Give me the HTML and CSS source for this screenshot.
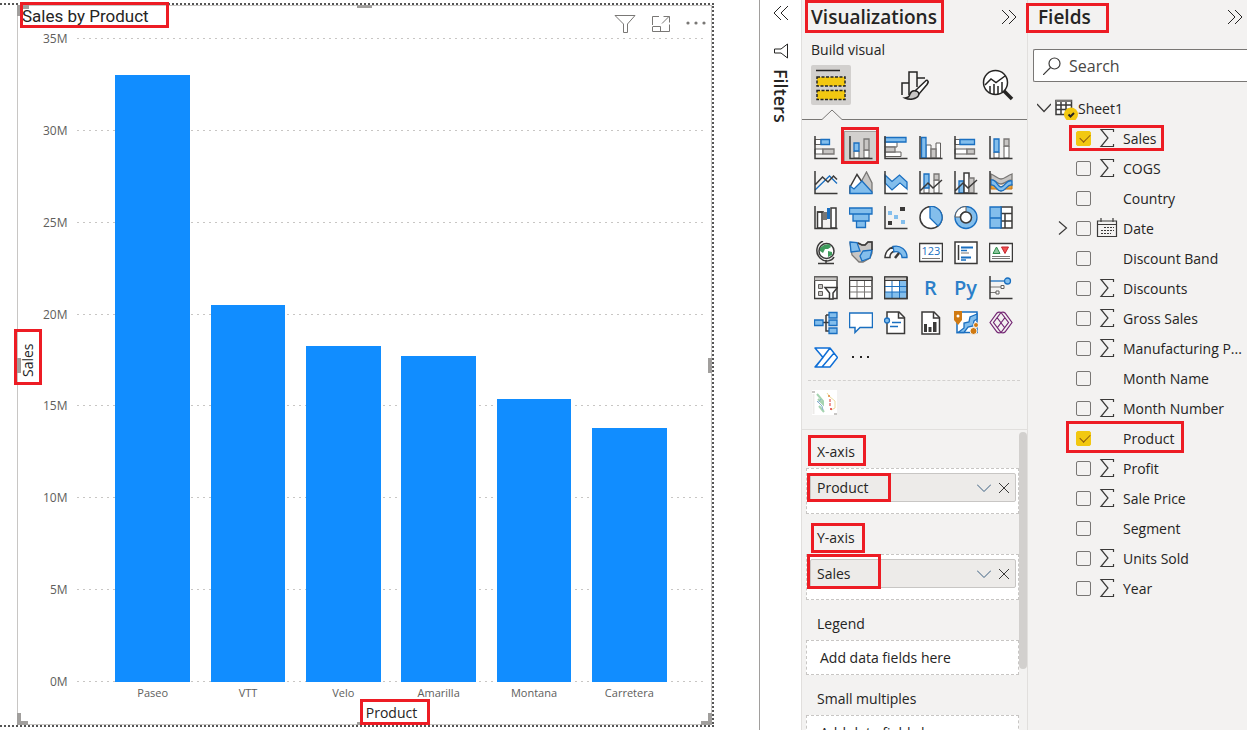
FILE: index.html
```html
<!DOCTYPE html>
<html lang="en">
<head>
  <meta charset="UTF-8">
  <title>Sales by Product</title>
  <link rel="stylesheet" href="styles.css">
</head>
<body>
  <main class="canvas">
    <div class="page">
      <section class="visual">
        <header class="visual-head">
          <h1>Sales by Product</h1>
          <div class="visual-tools">
            <button aria-label="Filters"><svg width="22" height="20" viewBox="0 0 22 20"><path d="M1 1.500H21L13.500 10V18.500H9.500V10Z"/></svg></button>
            <button aria-label="Focus mode"><svg width="20" height="18" viewBox="0 0 20 18"><path d="M8 1.500H1.500V10M1.500 12V16.500H18.500V9.500M1.500 11.500H9.500V16.500M11 8.500L18 1.500M12.500 1.500H18.500V7.500"/></svg></button>
            <button aria-label="More options"><svg class="dots" width="20" height="18" viewBox="0 0 20 18"><circle cx="2" cy="8" r="1.600"/><circle cx="10" cy="8" r="1.600"/><circle cx="18" cy="8" r="1.600"/></svg></button>
          </div>
        </header>
        <div class="chart">
          <div class="y-title">Sales</div>
          <div class="plot">
            <div class="ticks">
              <div class="tick">35M</div>
              <div class="tick">30M</div>
              <div class="tick">25M</div>
              <div class="tick">20M</div>
              <div class="tick">15M</div>
              <div class="tick">10M</div>
              <div class="tick">5M</div>
              <div class="tick">0M</div>
            </div>
            <div class="bars">
              <div class="bar" style="height:94.3%"></div>
              <div class="bar" style="height:58.6%"></div>
              <div class="bar" style="height:52.1%"></div>
              <div class="bar" style="height:50.7%"></div>
              <div class="bar" style="height:44%"></div>
              <div class="bar" style="height:39.5%"></div>
            </div>
          </div>
          <div class="names">
            <span>Paseo</span><span>VTT</span><span>Velo</span><span>Amarilla</span><span>Montana</span><span>Carretera</span>
          </div>
          <div class="x-title">Product</div>
        </div>
        <i class="handle tl"></i><i class="handle tm"></i><i class="handle ml"></i><i class="handle mr"></i>
        <i class="handle bl"></i><i class="handle bm"></i><i class="handle br"></i>
        <i class="mark mark-title"></i><i class="mark mark-sales"></i><i class="mark mark-product"></i>
      </section>
    </div>
  </main>

  <aside class="filters">
    <button aria-label="Expand filters"><svg width="16" height="16" viewBox="0 0 16 16"><path d="M8 1L1 8L8 15M15 1L8 8L15 15"/></svg></button>
    <svg width="16" height="16" viewBox="0 0 16 16"><path d="M14.500 1V15L8 10H1.500V6H8Z"/></svg>
    <h2>Filters</h2>
  </aside>

  <aside class="viz">
    <header class="pane-head">
      <h2>Visualizations</h2>
      <button aria-label="Collapse visualizations"><svg width="16" height="16" viewBox="0 0 16 16"><path d="M1 1L8 8L1 15M8 1L15 8L8 15"/></svg></button>
    </header>
    <h3>Build visual</h3>
    <div class="tabs">
      <button class="on" aria-label="Build visual">
        <svg width="32" height="32" viewBox="0 0 32 32"><path class="k" d="M1 1.500H25"/><path fill="#f2c811" stroke="#252423" stroke-width="1.500" stroke-dasharray="3 1.500" d="M2 8H30V17H2ZM2 21.500H30V30.500H2Z"/></svg>
      </button>
      <button aria-label="Format visual">
        <svg width="32" height="32" viewBox="0 0 32 32"><path class="k" fill="none" d="M3 26V14H10M10 26V3H18V18M18 9H26"/><path class="k" fill="#fff" d="M28.500 11.500C30 12.500 29 14 28 15.500L20 25L16.500 21.500L26 12.500C27 11.500 27.500 11 28.500 11.500Z"/><path class="k" fill="#c8c6c4" d="M16.500 22C19 22 20.500 24 19.500 26.500C17.500 30.500 10.500 31 6 29C10 28.500 10 27.500 11 25C12 22.500 14.500 21.500 16.500 22Z"/></svg>
      </button>
      <button aria-label="Analytics">
        <svg width="32" height="32" viewBox="0 0 32 32"><circle class="k" fill="#fff" cx="13.500" cy="13.500" r="12"/><path class="k" fill="none" d="M3 16L9 10L14 13.500L23 7M8 24V17M12 25V15M16 25V17M20 23V13"/><path d="M22 22L30 30" stroke="#252423" stroke-width="3.500"/></svg>
      </button>
    </div>
    <div class="pointer"><svg width="50" height="11" viewBox="0 0 50 11"><path d="M0 10.500H20L30 1L40 10.500H50"/></svg></div>

    <div class="gallery">
      <button aria-label="Stacked bar chart"><svg viewBox="0 0 24 24"><path class="w g" d="M1 3.500H7V8.500H1ZM1 13H9V18H1Z"/><path class="b" d="M7 3.500H15.500V8.500H7Z"/><path class="s" d="M9 13H20V18H9Z"/><path class="a" d="M1 0V22.500H23.500"/></svg></button>
      <button class="on" aria-label="Stacked column chart"><svg viewBox="0 0 24 24"><path class="w g" d="M5 15H10V22H5ZM15 14H20V22H15Z"/><path class="b" d="M5 7H10V15H5Z"/><path class="s" d="M15 3H20V14H15Z"/><path class="a" d="M1 0V22.500H23.500"/></svg></button>
      <button aria-label="Clustered bar chart"><svg viewBox="0 0 24 24"><path class="w g" d="M1 6H13V11H1ZM1 16H17V20.500H1Z"/><path class="s" d="M1 11H11V16H1Z"/><path class="b" d="M1 1.500H22V6H1Z"/><path class="a" d="M1 0V22.500H23.500"/></svg></button>
      <button aria-label="Clustered column chart"><svg viewBox="0 0 24 24"><path class="w g" d="M7 9H12V22H7ZM17 7H21.500V22H17Z"/><path class="s" d="M12 13H17V22H12Z"/><path class="b" d="M2.500 1.500H7V22H2.500Z"/><path class="a" d="M1 0V22.500H23.500"/></svg></button>
      <button aria-label="100% stacked bar chart"><svg viewBox="0 0 24 24"><path class="w g" d="M1 3.500H6V8.500H1ZM1 13H13V18H1Z"/><path class="b" d="M6 3.500H20.500V8.500H6Z"/><path class="s" d="M13 13H20.500V18H13Z"/><path class="a" d="M1 0V22.500H23.500"/></svg></button>
      <button aria-label="100% stacked column chart"><svg viewBox="0 0 24 24"><path class="w g" d="M5 16H10V22H5ZM15 10H20V22H15Z"/><path class="b" d="M5 3H10V16H5Z"/><path class="s" d="M15 3H20V10H15Z"/><path class="a" d="M1 0V22.500H23.500"/></svg></button>

      <button aria-label="Line chart"><svg viewBox="0 0 24 24"><path class="bl" d="M1 19L15.500 5L23 12.500"/><path class="a" d="M1 14L8.500 6L14 11L19.500 5L23 8.500M1 0V22.500H23.500"/></svg></button>
      <button aria-label="Area chart"><svg viewBox="0 0 24 24"><path class="s" d="M12 11L17.500 1L23 12V22H12Z"/><path class="w d" d="M1 16L8 3.500L15 14L11 22H1Z"/><path class="b" d="M1 15L5 18L13 10L23 21V22.500H1Z"/></svg></button>
      <button aria-label="Stacked area chart"><svg viewBox="0 0 24 24"><path class="b" d="M1 4L8 10.500L15.500 4L23 11V18L16 12L8 19L1 12Z"/><path class="w" d="M2 14L8 20L16 13L23 19V22H2Z"/><path class="a" d="M1 0V22.500H23.500"/></svg></button>
      <button aria-label="Line and stacked column chart"><svg viewBox="0 0 24 24"><path class="w g" d="M5 15H10V22H5ZM15 9H20V22H15Z"/><path class="b" d="M5 3H10V17H5Z"/><path class="s" d="M15 3H20V9H15Z"/><path class="a" d="M1 20L9 12L14 17L23 9M1 0V22.500H23.500"/></svg></button>
      <button aria-label="Line and clustered column chart"><svg viewBox="0 0 24 24"><path class="b" d="M5 10H10V22H5Z"/><path class="w d" d="M10 2H15V22H10Z"/><path class="s" d="M15 7H20V22H15Z"/><path class="a" d="M1 20L9 12L14 17L23 9M1 0V22.500H23.500"/></svg></button>
      <button aria-label="Ribbon chart"><svg viewBox="0 0 24 24"><path fill="#e8a33d" stroke="#c97410" d="M2 13H7L12 16L17 13H23V18H17L12 20L7 18H2Z"/><path class="s" d="M2 3C7 5 9 8 12 8S18 5 23 3V9C18 9 16 13 12 13S7 9 2 9Z"/><path class="b" d="M2 9C8 8 8 16 12 16S17 8 23 10V14C18 13 17 20 12 20S7 13 2 14Z"/><path class="a" d="M1 0V22.500H23.500"/></svg></button>

      <button aria-label="Waterfall chart"><svg viewBox="0 0 24 24"><path class="w d" d="M3.500 6H8V22H3.500ZM17 2H22V22H17Z"/><path class="a" d="M3 6H10"/><path fill="#797775" d="M9 6H13V14H9Z"/><path fill="#1a6fc0" d="M13 2H16V13H13Z"/><path class="a" d="M1 0V22.500H23.500"/></svg></button>
      <button aria-label="Funnel chart"><svg viewBox="0 0 24 24"><path class="b" d="M.5 2H23V8H.5ZM4 8H20V15H4ZM7.500 15H16.500V21.500H7.500Z"/></svg></button>
      <button aria-label="Scatter chart"><svg viewBox="0 0 24 24"><path fill="#83beec" d="M4 5H8V9H4ZM10 9H14V13H10ZM17 14H21V18H17Z"/><path fill="#3b3a39" d="M16 1H21V5H16ZM4 15H8V19H4Z"/><path class="a" d="M1 0V22.500H23.500"/></svg></button>
      <button aria-label="Pie chart"><svg viewBox="0 0 24 24"><circle class="w d" cx="12" cy="11.500" r="11"/><path class="b" d="M11 .5A11 11 0 0 1 19 20L11 12Z"/></svg></button>
      <button aria-label="Donut chart"><svg viewBox="0 0 24 24"><circle class="b" cx="12" cy="11.500" r="11"/><path class="w g" d="M12 .5A11 11 0 0 0 1 11H6A6 6 0 0 1 12 5.500Z"/><circle class="w d" cx="12" cy="11.500" r="5.500"/></svg></button>
      <button aria-label="Treemap"><svg viewBox="0 0 24 24"><path class="w d" d="M12 1H23V22H12ZM12 7.500H23M16 7.500V22M12 15H16M16 15H23"/><path class="b" d="M1 1H12V22H1ZM1 12H12"/></svg></button>

      <button aria-label="Map"><svg viewBox="0 0 24 24"><circle class="w d" cx="12.500" cy="10" r="7.500"/><path fill="#3f9b5c" d="M10 4L15 3L17 6L14 8L11 8L9 12L6 10L6 7ZM14 10L18 11L18 14L14 16Z"/><path class="a" d="M9 0C2 3 1 12 6 17S18 20 20 16M12 19V22M4 22.500H20"/></svg></button>
      <button aria-label="Filled map"><svg viewBox="0 0 24 24"><path class="s" d="M1 2L9 2L13 4L16 4L19 1H23V12L21 17L14 21L10 21L3 14Z"/><path class="b" d="M1 1L8 1.500L11 10L2 11Z"/><path class="b" d="M14 10L23 9L21 17L13 20L11 15Z"/><path class="d" fill="none" d="M9 2L13 4H16L19 1H23V9"/></svg></button>
      <button aria-label="Gauge"><svg viewBox="0 0 24 24"><path class="w d" d="M1 16.500A11 11 0 0 1 9 6L11 10A6 6 0 0 0 6 16.500Z"/><path class="b" d="M9 5.500A11 11 0 0 1 23 16.500H18A6 6 0 0 0 10 11Z"/><path d="M11 17L15 12" stroke="#3b3a39" stroke-width="2.500"/></svg></button>
      <button aria-label="Card"><svg viewBox="0 0 24 24"><path class="w d" d="M.5 2.500H23.500V20.500H.5Z"/><path class="gl" d="M3 17.500H21"/><text class="num" x="2.500" y="14">123</text></svg></button>
      <button aria-label="Multi-row card"><svg viewBox="0 0 24 24"><path class="w d" d="M1 1H23V22.500H1Z"/><path class="a" d="M4.500 4V19"/><path d="M7 6.500H19M7 16.500H17" stroke="#1a6fc0" stroke-width="2"/><path class="bl" d="M7 9.500H13M7 19H12"/><path class="gl" d="M7 12H15"/></svg></button>
      <button aria-label="KPI"><svg viewBox="0 0 24 24"><path class="w d" d="M.5 2.500H23.500V20.500H.5Z"/><path fill="#8bc79c" stroke="#2e8b4a" d="M4 12.500L7.500 6L11 12.500Z"/><path fill="#f05050" stroke="#c4262e" d="M12.500 6H19.500L16 12.500Z"/><path class="gl" d="M3 15.500H21M3 17.500H21"/></svg></button>

      <button aria-label="Slicer"><svg viewBox="0 0 24 24"><path class="w d" d="M.5 1H23V22.500H.5Z"/><path fill="#c8c6c4" stroke="#605e5c" d="M.5 1H23V4.500H.5ZM4.500 8.500H8.500V12.500H4.500ZM4.500 15.500H8.500V19.500H4.500Z"/><path class="w d" d="M11 11.500H23.500L19 17V23H15.500V17Z"/></svg></button>
      <button aria-label="Table"><svg viewBox="0 0 24 24"><path class="w d" d="M.5 1H23V22.500H.5Z"/><path class="gl" d="M1 10.500H23M1 16H23M8 5V22M15.500 5V22"/><path fill="#c8c6c4" stroke="#3b3a39" d="M.5 1H23V4.500H.5Z"/></svg></button>
      <button aria-label="Matrix"><svg viewBox="0 0 24 24"><path class="w d" d="M.5 1H23V22.500H.5Z"/><path fill="#83beec" d="M15.500 5H22.500V22H1V16H15.500Z"/><path d="M1 10.500H23M1 16H23M8 5V22M15.500 5V22" stroke="#1a6fc0"/><path fill="#c8c6c4" stroke="#3b3a39" d="M.5 1H23V4.500H.5Z"/><path class="a" d="M.5 1V22.500H23V1"/></svg></button>
      <button class="word" aria-label="R script visual">R</button>
      <button class="word" aria-label="Python visual">Py</button>
      <button aria-label="Key influencers"><svg viewBox="0 0 24 24"><path class="bl" d="M1 5H15"/><path class="gl" d="M1 11H12M1 16.500H7"/><circle class="b" cx="18.500" cy="5" r="3"/><path class="w g" d="M12 9.500H15V12.500H12ZM7 15H10V18H7Z"/><path class="a" d="M1 0V22.500H23.500"/></svg></button>

      <button aria-label="Decomposition tree"><svg viewBox="0 0 24 24"><path class="a" d="M9 11.500H15M12 4H15M12 4V20H15"/><path class="b" d="M.5 9H9V14.500H.5ZM15 1.500H23V7H15ZM15 9H23V14.500H15ZM15 17H23V22.500H15Z"/></svg></button>
      <button aria-label="Q&amp;A"><svg viewBox="0 0 24 24"><path class="w bs" d="M.5 2H23.500V16.500H11L6 21.500V16.500H.5Z"/></svg></button>
      <button aria-label="Smart narrative"><svg viewBox="0 0 24 24"><path class="w d" d="M3 1H15L20.500 6.500V22.500H3Z"/><path class="d" fill="none" d="M14.500 1V7H20"/><circle class="b" cx="3" cy="9.500" r="2.500"/><path class="bl" d="M8 11.500H17M6 15.500H14"/></svg></button>
      <button aria-label="Paginated report"><svg viewBox="0 0 24 24"><path class="w d" d="M3 1H15L20.500 6.500V23H3Z"/><path class="d" fill="none" d="M14.500 1V7H20"/><path fill="#3b3a39" d="M5 13H8V21H5ZM9.500 16H12.500V21H9.500ZM14 11H17.500V21H14Z"/></svg></button>
      <button aria-label="ArcGIS map"><svg viewBox="0 0 24 24"><path class="w bs" d="M3 1H23V21.500H3Z"/><path class="b" d="M23 3L16 6L15 11L10 12V17L4 21.500H10L14 16L19 15L20 10L23 8Z"/><path fill="#d07a12" d="M0 0H8V9L4 14L0 9Z"/><circle fill="#fff" cx="4" cy="5" r="1.500"/><circle cx="19.500" cy="20" r="3.500" fill="#d07a12" stroke="#f3f2f1"/><circle cx="22" cy="14" r="2.500" fill="#d07a12" stroke="#f3f2f1"/></svg></button>
      <button aria-label="Power Apps"><svg class="apps" viewBox="0 0 24 24"><path d="M1 11.500L8 2Q9.500 .5 12 1.500Q14.500 .5 16 2L23 11.500L16 21Q14.500 22.500 12 21.500Q9.500 22.500 8 21ZM12 1.500L19.500 11.500L12 21.500L4.500 11.500ZM8 6.500L15.500 16.500M16 6.500L8.500 16.500"/></svg></button>

      <button aria-label="Power Automate"><svg viewBox="0 0 24 24"><path class="w flow" d="M1 2H16L23.500 11.500L16 21H1L9 11.500ZM16 2L2 20.500M20 7L8 21"/></svg></button>
      <button aria-label="Get more visuals"><svg viewBox="0 0 24 24" fill="#252423"><path d="M3 10H5V12H3ZM11 10H13V12H11ZM18 10H20V12H18Z"/></svg></button>
    </div>

    <div class="custom">
      <button aria-label="Custom visual"><svg width="25" height="25" viewBox="0 0 25 25"><path d="M0 0H25V25H0Z" fill="#fff"/><path d="M1.500 4V24" stroke="#edebe9" stroke-width="2"/><path d="M0 1H3V3H0ZM22 23H25V25H22Z" fill="#c8c6c4"/><path d="M5 4L11 11V14L6 9M7 16L12 22" fill="none" stroke="#a5d3b0" stroke-width="2"/><path d="M5 11L10 16L11 20M9 9L6 13" fill="none" stroke="#87aecf"/><path d="M15 3L18 7L23 11V18L19 20" fill="none" stroke="#efdca0"/><path d="M18 9V16" stroke="#ee9a96" stroke-width="2" stroke-dasharray="3 1"/><circle cx="19" cy="19" r="1" fill="#d33"/><circle cx="17" cy="6" r="1" fill="#e08a3c"/></svg></button>
    </div>

    <div class="wells">
      <section>
        <h4>X-axis</h4>
        <div class="well">
          <div class="pill">Product
            <button aria-label="Product menu"><svg width="14" height="10" viewBox="0 0 14 10"><path d="M0 1.500L7 8.500L14 1.500"/></svg></button>
            <button aria-label="Remove Product"><svg width="12" height="12" viewBox="0 0 12 12"><path d="M1 1L11 11M11 1L1 11"/></svg></button>
          </div>
        </div>
      </section>
      <section>
        <h4>Y-axis</h4>
        <div class="well">
          <div class="pill">Sales
            <button aria-label="Sales menu"><svg width="14" height="10" viewBox="0 0 14 10"><path d="M0 1.500L7 8.500L14 1.500"/></svg></button>
            <button aria-label="Remove Sales"><svg width="12" height="12" viewBox="0 0 12 12"><path d="M1 1L11 11M11 1L1 11"/></svg></button>
          </div>
        </div>
      </section>
      <section>
        <h4>Legend</h4>
        <div class="well empty">Add data fields here</div>
      </section>
      <section>
        <h4>Small multiples</h4>
        <div class="well empty">Add data fields here</div>
      </section>
      <i class="thumb"></i>
    </div>
    <i class="mark mark-viz"></i><i class="mark mark-column"></i>
    <i class="mark mark-x"></i><i class="mark mark-x-field"></i>
    <i class="mark mark-y"></i><i class="mark mark-y-field"></i>
  </aside>

  <aside class="fields">
    <header class="pane-head">
      <h2>Fields</h2>
      <button aria-label="Collapse fields"><svg width="16" height="16" viewBox="0 0 16 16"><path d="M1 1L8 8L1 15M8 1L15 8L8 15"/></svg></button>
    </header>
    <label class="search">
      <svg width="18" height="18" viewBox="0 0 18 18"><circle cx="11.500" cy="6.500" r="5.500"/><path d="M7.500 10.500L0 18"/></svg>
      <input type="text" placeholder="Search" aria-label="Search">
    </label>
    <div class="table-row">
      <svg class="chev" width="14" height="10" viewBox="0 0 14 10"><path d="M0 1L7 8.500L14 1"/></svg>
      <svg width="24" height="24" viewBox="0 0 24 24"><path d="M1 4.500H16.500V18.500H1ZM1 9H16.500M1 13.500H16.500M6 5V18M11 5V18" fill="#fff" stroke="#3b3a39" stroke-width="1.500"/><path d="M1 5H16.500" stroke="#797775" stroke-width="2"/><circle cx="16" cy="18.500" r="7" fill="#f2c811"/><path d="M13.500 18.500L15.500 20.500L19 17" fill="none" stroke="#252423" stroke-width="2"/></svg>
      <span>Sheet1</span>
    </div>
    <ul>
      <li><label><input type="checkbox" checked><svg class="sum"><use href="#sum"/></svg><span>Sales</span></label></li>
      <li><label><input type="checkbox"><svg class="sum"><use href="#sum"/></svg><span>COGS</span></label></li>
      <li><label><input type="checkbox"><span>Country</span></label></li>
      <li><svg class="expand" width="10" height="16" viewBox="0 0 10 16"><path d="M1 1.500L8.500 8L1 14.500"/></svg><label><input type="checkbox"><svg class="sum" viewBox="0 0 22 20"><path d="M1.500 3H20.500V18.500H1.500ZM1.500 6.500H20.500M5 0V4M17 0V4"/><path stroke-dasharray="2 1" d="M8 9.500H18M5 12.500H18M5 15.500H15"/></svg><span>Date</span></label></li>
      <li><label><input type="checkbox"><span>Discount Band</span></label></li>
      <li><label><input type="checkbox"><svg class="sum"><use href="#sum"/></svg><span>Discounts</span></label></li>
      <li><label><input type="checkbox"><svg class="sum"><use href="#sum"/></svg><span>Gross Sales</span></label></li>
      <li><label><input type="checkbox"><svg class="sum"><use href="#sum"/></svg><span>Manufacturing P...</span></label></li>
      <li><label><input type="checkbox"><span>Month Name</span></label></li>
      <li><label><input type="checkbox"><svg class="sum"><use href="#sum"/></svg><span>Month Number</span></label></li>
      <li><label><input type="checkbox" checked><span>Product</span></label></li>
      <li><label><input type="checkbox"><svg class="sum"><use href="#sum"/></svg><span>Profit</span></label></li>
      <li><label><input type="checkbox"><svg class="sum"><use href="#sum"/></svg><span>Sale Price</span></label></li>
      <li><label><input type="checkbox"><span>Segment</span></label></li>
      <li><label><input type="checkbox"><svg class="sum"><use href="#sum"/></svg><span>Units Sold</span></label></li>
      <li><label><input type="checkbox"><svg class="sum"><use href="#sum"/></svg><span>Year</span></label></li>
    </ul>
    <i class="mark mark-fields"></i><i class="mark mark-f-sales"></i><i class="mark mark-f-product"></i>
  </aside>

  <svg class="defs" width="0" height="0"><symbol id="sum" viewBox="0 0 22 20"><path d="M17.500 4V1.500H5L12 10L5 18.500H17.500V16"/></symbol></svg>
</body>
</html>
```
FILE: styles.css
```css
*{box-sizing:border-box;}
body{margin:0; display:flex; height:100vh; overflow:hidden; background:#fff; color:#252423; font:14px/20px "Open Sans", "Noto Sans", sans-serif;}
h1,h2,h3,h4,ul{margin:0; padding:0; font-weight:400; list-style:none;}
button{padding:0; border:0; background:none; font:inherit; color:inherit;}
button,svg{display:block; flex:none;}
aside{flex:none; position:relative;}
.defs{position:absolute;}

/* report canvas */
.canvas{flex:1; padding:3px 45px 3px 0;}
.page{height:100%; padding-left:17px; border:2px dotted #555; border-left:0;}
.visual{position:relative; height:100%; display:flex; flex-direction:column; border:1px solid #c8c6c4;}
.visual-head{display:flex; justify-content:space-between; height:32px; padding-left:4px;}
.visual-head h1{font:17px/20px Roboto, sans-serif;}
.visual-tools{display:flex; gap:15px; padding:4px 5px 0 0;}
.visual-tools svg{fill:none; stroke:#797775;}
.visual-tools .dots{fill:#797775; stroke:none;}
.chart{flex:1; display:grid; grid-template:1fr 22px 20px / 25px 1fr; padding-right:6px;}
.y-title{writing-mode:vertical-rl; transform:rotate(180deg); text-align:center;}
.y-title,.x-title{font-size:14px;}
.plot{display:grid;}
.ticks,.bars{grid-area:1 / 1;}
.ticks{display:flex; flex-direction:column; justify-content:space-between;}
.tick{display:grid; grid-template-columns:26px 1fr; column-gap:8px; align-items:center; height:1px; line-height:1px; color:#605e5c; font-size:12px;}
.tick::after{content:""; height:1px; background:repeating-linear-gradient(90deg, #c8c6c4 0 2px, transparent 2px 6px);}
.tick:last-child,.tick:nth-child(7){text-indent:7px;}
.bars,.names{display:grid; grid-template-columns:repeat(6, 1fr); padding:0 28px 0 62px;}
.bars{align-items:end;}
.bar{width:78%; justify-self:center; background:#118dff;}
.names{grid-column:2; text-align:center; color:#605e5c; font-size:11px; line-height:22px;}
.x-title{grid-column:2; padding-left:35px; text-align:center; line-height:18px;}
.handle{position:absolute; border:0 solid #a19f9d;}
.tl{left:-1px; top:-1px; width:12px; height:11px; border-width:4px 0 0 4px;}
.bl{left:-1px; bottom:-1px; width:11px; height:12px; border-width:0 0 4px 4px;}
.br{right:-1px; bottom:-1px; width:11px; height:12px; border-width:0 4px 4px 0;}
.tm,.bm{left:50%; width:15px; margin-left:-8px; border-top-width:3px;}
.tm{top:-1px;}
.bm{bottom:-1px;}
.ml,.mr{top:50%; height:15px; margin-top:-7px; border-left-width:4px;}
.ml{left:-1px;}
.mr{right:-1px;}

/* red callouts */
.mark{position:absolute; border:3px solid #ed1c24; pointer-events:none;}
.mark-title{left:2px; top:-4px; width:149px; height:26px;}
.mark-sales{left:-4px; top:50%; width:28px; height:56px; margin-top:-36px;}
.mark-product{left:50%; bottom:-1px; width:70px; height:26px; margin-left:-5px;}
.mark-viz{left:3px; top:0; width:139px; height:33px;}
.mark-column{left:39px; top:127px; width:38px; height:37px;}
.mark-x{left:6px; top:435px; width:58px; height:31px;}
.mark-x-field{left:5px; top:473px; width:84px; height:29px;}
.mark-y{left:9px; top:523px; width:54px; height:30px;}
.mark-y-field{left:5px; top:554px; width:74px; height:35px;}
.mark-fields{left:-2px; top:3px; width:83px; height:30px;}
.mark-f-sales{left:41px; top:125px; width:95px; height:26px;}
.mark-f-product{left:38px; top:421px; width:118px; height:32px;}

/* collapsed filters pane */
.filters{width:42px; padding-top:5px; border-left:1px solid #a19f9d; display:flex; flex-direction:column; align-items:center; gap:22px;}
.filters svg{fill:none; stroke:#252423;}
.filters h2{margin-top:-12px; writing-mode:vertical-rl; font-size:18px; font-weight:600; line-height:22px;}

/* visualizations pane */
.viz,.fields{background:#f3f2f1; border-left:1px solid #e1dfdd;}
.viz{width:226px; display:flex; flex-direction:column;}
.pane-head{display:flex; justify-content:space-between; align-items:center; height:34px; padding:0 10px 0 9px;}
.pane-head h2{font-size:19px; font-weight:600;}
.pane-head svg{fill:none; stroke:#252423;}
.viz h3{padding:6px 9px 5px; font-size:14px;}
.tabs{display:flex; justify-content:space-between; padding:0 9px;}
.tabs button{display:grid; place-items:center; width:40px; height:40px;}
.tabs .on{background:#d2d0ce; border-radius:2px;}
.k{stroke:#252423; stroke-width:1.5;}
.pointer{display:flex; margin-top:4px;}
.pointer::after{content:""; flex:1; border-bottom:1px solid #797775;}
.pointer svg{fill:none; stroke:#797775;}
.gallery{display:grid; grid-template-columns:repeat(6, 35px); grid-auto-rows:35px; padding:10px 6px 5px;}
.gallery button{display:grid; place-items:center; margin:2px;}
.gallery svg{width:24px; height:24px;}
.gallery .on{background:#d2d0ce; outline:1px solid #a19f9d;}
.gallery .word{font-size:20px; font-weight:600; color:#2b7fc9;}
.w{fill:#fff;}
.g{stroke:#605e5c;}
.d{stroke:#3b3a39; stroke-width:1.5;}
.b{fill:#83beec; stroke:#1a6fc0; stroke-width:1.3;}
.s{fill:#c8c6c4; stroke:#797775; stroke-width:1.3;}
.a{fill:none; stroke:#3b3a39; stroke-width:1.5;}
.bl{fill:none; stroke:#1a6fc0; stroke-width:1.3;}
.bs{stroke:#1a6fc0; stroke-width:1.5;}
.gl{fill:none; stroke:#797775;}
.num{font:11px "Open Sans", sans-serif; fill:#1a6fc0;}
.apps{fill:none; stroke:#742774; stroke-width:1.2;}
.flow{stroke:#0f6fd6; stroke-width:1.5; stroke-linejoin:round;}
.custom{margin:0 7px 0 6px; padding:9px 4px 14px; border-top:1px dashed #d2d0ce;}
.wells{flex:1; position:relative; overflow:hidden; display:flex; flex-direction:column; gap:14px; padding:12px 8px 0 4px; border-top:1px solid #e1dfdd;}
.wells section{flex:none;}
.wells h4{padding:0 11px 6px;}
.well{height:46px; padding:4px 2px 4px 3px; background:#fff; border:1px dashed #c8c6c4;}
.empty{height:35px; padding:7px 13px;}
.pill{display:flex; align-items:center; gap:7px; height:29px; padding:0 5px 0 6px; background:#edebe9; border:1px solid #c8c6c4; border-radius:2px;}
.pill button:first-of-type{margin-left:auto;}
.pill svg{fill:none; stroke:#3b5f80;}
.pill button + button svg{stroke:#3b3a39;}
.thumb{position:absolute; right:0; top:2px; width:8px; height:237px; border-radius:4px; background:#d2d0ce;}

/* fields pane */
.fields{width:220px;}
.fields .pane-head{padding:0 4px 0 10px;}
.search{display:flex; align-items:center; gap:8px; height:33px; margin:15px 0 11px 5px; padding-left:9px; background:#fff; border:1px solid #797775; border-right:0; border-radius:2px 0 0 2px;}
.search svg,.chev,.expand,.sum{fill:none; stroke:#3b3a39; stroke-width:1.2;}
.search input{flex:1; min-width:0; padding:0; border:0; outline:0; background:none; font:16px/24px "Open Sans", sans-serif;}
.search input::placeholder{color:#484644; opacity:1;}
.table-row{display:flex; align-items:center; gap:4px; height:30px; margin-top:1px; padding-left:9px;}
.table-row span{margin-left:-5px;}
.fields span{padding-top:2px;}
.fields li{display:flex; justify-content:flex-end; align-items:center; height:30px;}
.fields li label{flex:none; display:grid; grid-template-columns:15px 22px 1fr; gap:5px; align-items:center; width:171px; white-space:nowrap;}
.fields li span{grid-column:3;}
.expand{margin-right:8px;}
.sum{width:22px; height:20px;}
.fields input[type=checkbox]{appearance:none; position:relative; width:15px; height:15px; margin:0; border:1px solid #797775; border-radius:2px;}
.fields input:checked{background:#f2c811; border-color:#f2c811;}
.fields input:checked::after{content:""; position:absolute; left:3px; top:2px; width:9px; height:5px; border:solid #8a5a10; border-width:0 0 1px 1px; transform:rotate(-45deg);}
```
